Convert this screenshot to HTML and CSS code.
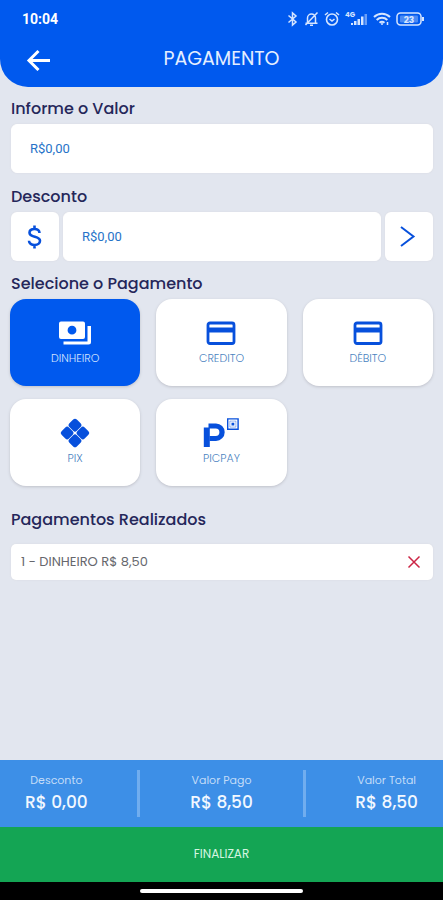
FILE: index.html
```html
<!DOCTYPE html>
<html lang="pt-BR">
<head>
<meta charset="utf-8">
<meta name="viewport" content="width=device-width, initial-scale=1">
<title>Pagamento</title>
<link rel="stylesheet" href="styles.css">
</head>
<body>
<div class="app">
  <header class="header">
    <div class="status">
      <span class="clock">10:04</span>
      <div class="status-icons">
        <svg width="12" height="16" viewBox="0 0 12 16" fill="none" stroke="currentColor" stroke-width="1.5"><path d="M1.500 4.500L9 11l-3.500 3V2L9 5l-7.500 6.500"/></svg>
        <svg width="15" height="16" viewBox="0 0 15 16" fill="none" stroke="currentColor" stroke-width="1.500"><path d="M1.500 12.200h12M3.500 12V7a4 4 0 0 1 8 0v5M6 14.300h3M13.500 1.500L1.500 14"/></svg>
        <svg width="16" height="16" viewBox="0 0 16 16" fill="none" stroke="currentColor" stroke-width="1.600"><circle cx="8" cy="8.500" r="5.500"/><path d="M1 4l3-2.500M15 4l-3-2.500M5.500 8L8 10l2.500-2"/></svg>
        <svg width="23" height="16" viewBox="0 0 23 16" fill="currentColor"><text class="network" x="0" y="6">4G</text><path d="M6 12h2v2H6zM9 10h2.500v4H9zM12.500 8H15v6h-2.500zM16 5.500h2.500V14H16z"/><path opacity=".5" d="M19.500 3H22v11h-2.500z"/></svg>
        <svg width="18" height="16" viewBox="0 0 18 16" fill="none" stroke="currentColor" stroke-width="2"><path d="M1 6a11.500 11.500 0 0 1 16 0M3.700 9a7.500 7.500 0 0 1 10.600 0M6.500 11.700a4 4 0 0 1 5 0"/><path d="M9 12v2M14.500 11v3" stroke-width="1.500"/></svg>
        <svg width="29" height="16" viewBox="0 0 29 16" fill="none" stroke="currentColor" stroke-width="1.500"><rect x="1" y="2" width="24" height="12" rx="3.500"/><path d="M27 6v4" stroke-width="2"/><rect x="4" y="4.500" width="18" height="7" rx="1" fill="currentColor" stroke="none" opacity=".35"/><text class="charge" x="13" y="11.500" text-anchor="middle">23</text></svg>
      </div>
    </div>
    <div class="titlebar">
      <button class="back" type="button" aria-label="Voltar">
        <svg width="26" height="24" viewBox="0 0 26 24" fill="none" stroke="currentColor" stroke-width="3"><path d="M25 13.500H4M13.500 4L4 13.500l9.500 9.500"/></svg>
      </button>
      <h1 class="title">PAGAMENTO</h1>
    </div>
  </header>

  <main class="content">
    <label class="heading" for="valor">Informe o Valor</label>
    <input class="field" id="valor" type="text" inputmode="decimal" placeholder="R$0,00">

    <label class="heading" for="desconto">Desconto</label>
    <div class="discount">
      <button class="tile" type="button" aria-label="Desconto em reais">
        <svg width="24" height="26" viewBox="0 0 24 26" fill="none" stroke="currentColor" stroke-width="2.600"><path d="M16.500 9C16.500 6.500 14.500 5 11.500 5 8.500 5 6.500 6.500 6.500 8.800c0 5.200 10.500 2.900 10.500 8 0 2.500-2.200 4.200-5.300 4.200C8.500 21 6 19.400 6 16.700M11.500 1.500V5M11.500 21v3.500"/></svg>
      </button>
      <input class="field" id="desconto" type="text" inputmode="decimal" placeholder="R$0,00">
      <button class="tile" type="button" aria-label="Aplicar desconto">
        <svg width="20" height="24" viewBox="0 0 20 24" fill="none" stroke="currentColor" stroke-width="2"><path d="M2 2l12.500 9.500L2 21"/></svg>
      </button>
    </div>

    <h2 class="heading">Selecione o Pagamento</h2>
    <div class="methods">
      <button class="method selected" type="button" aria-pressed="true">
        <svg width="34" height="30" viewBox="0 0 34 30" fill="currentColor"><path fill-rule="evenodd" d="M3 3.500h22a2 2 0 0 1 2 2V19a2 2 0 0 1-2 2H3a2 2 0 0 1-2-2V5.500a2 2 0 0 1 2-2zm11 4.300a4.400 4.400 0 1 0 0 8.800 4.400 4.400 0 0 0 0-8.800z"/><path d="M29.500 8H33v16a2.500 2.500 0 0 1-2.500 2.500H5.500v-3h24z"/></svg>
        <span>DINHEIRO</span>
      </button>
      <button class="method" type="button" aria-pressed="false">
        <svg width="34" height="30" viewBox="0 0 34 30" fill="none" stroke="currentColor"><rect x="4" y="5" width="26" height="20.500" rx="2" stroke-width="2.800"/><path d="M4 12h26" stroke-width="5"/></svg>
        <span>CREDITO</span>
      </button>
      <button class="method" type="button" aria-pressed="false">
        <svg width="34" height="30" viewBox="0 0 34 30" fill="none" stroke="currentColor"><rect x="4" y="5" width="26" height="20.500" rx="2" stroke-width="2.800"/><path d="M4 12h26" stroke-width="5"/></svg>
        <span>DÉBITO</span>
      </button>
      <button class="method" type="button" aria-pressed="false">
        <svg width="34" height="30" viewBox="0 0 34 30" fill="currentColor"><g transform="translate(17 15) rotate(45)"><rect x="-10.800" y="-10.800" width="10.500" height="10.500" rx="2.600"/><rect x=".3" y="-10.800" width="10.500" height="10.500" rx="2.600"/><rect x="-10.800" y=".3" width="10.500" height="10.500" rx="2.600"/><rect x=".3" y=".3" width="10.500" height="10.500" rx="2.600"/></g></svg>
        <span>PIX</span>
      </button>
      <button class="method" type="button" aria-pressed="false">
        <svg width="36" height="30" viewBox="0 0 36 30" fill="currentColor"><path d="M.8 9.500h6v19.500h-6z"/><path d="M5.500 5.500H13a8.700 8.700 0 0 1 0 17.400H6.500v-5h6.200a3.700 3.700 0 0 0 0-7.400H5.500z"/><path fill="none" stroke="currentColor" stroke-width="1.400" d="M24.700.9h10.400v10.400H24.700z"/><path fill="none" stroke="currentColor" stroke-width=".7" opacity=".6" d="M26.900 3.100h6v6h-6z"/><path d="M28.500 4.700h2.800v2.800h-2.800z"/></svg>
        <span>PICPAY</span>
      </button>
    </div>

    <h2 class="heading done">Pagamentos Realizados</h2>
    <ul class="payments">
      <li class="payment">
        <span>1 - DINHEIRO R$ 8,50</span>
        <button class="remove" type="button" aria-label="Remover pagamento">
          <svg width="14" height="14" viewBox="0 0 14 14" fill="none" stroke="currentColor" stroke-width="1.500"><path d="M1.500 1.500l11 11M12.500 1.500l-11 11"/></svg>
        </button>
      </li>
    </ul>
  </main>

  <footer>
    <div class="summary">
      <div class="total"><span>Desconto</span><strong>R$ 0,00</strong></div>
      <i class="divider"></i>
      <div class="total"><span>Valor Pago</span><strong>R$ 8,50</strong></div>
      <i class="divider"></i>
      <div class="total"><span>Valor Total</span><strong>R$ 8,50</strong></div>
    </div>
    <button class="finish" type="button">FINALIZAR</button>
    <div class="navbar"><i class="handle"></i></div>
  </footer>
</div>
</body>
</html>
```
FILE: styles.css
```css
* {
  box-sizing: border-box;
}

body {
  margin: 0;
  background: #e2e6ef;
  font-family: Poppins, Inter, "Liberation Sans", sans-serif;
}

button {
  margin: 0;
  padding: 0;
  border: 0;
  background: none;
  color: inherit;
  font: inherit;
  cursor: pointer;
}

svg {
  display: block;
}

.app {
  display: flex;
  flex-direction: column;
  min-height: 100vh;
}

.header {
  padding-bottom: 10px;
  border-radius: 0 0 28px 28px;
  background: #0059ee;
  color: #fff;
}

.status {
  display: flex;
  align-items: center;
  justify-content: space-between;
  height: 37px;
  padding: 0 18px 0 22px;
}

.clock {
  font-family: Roboto, sans-serif;
  font-size: 14px;
  font-weight: 700;
}

.status-icons {
  display: flex;
  align-items: center;
  gap: 5px;
  color: #d5e5ff;
}

.network,
.charge {
  font-size: 7px;
  font-weight: 700;
  fill: currentColor;
  stroke: none;
}

.charge {
  font-size: 9px;
}

.titlebar {
  display: grid;
  grid-template-columns: 26px 1fr 26px;
  align-items: center;
  height: 40px;
  padding: 4px 25px 0;
}

.title {
  margin: 0;
  color: #e4eeff;
  font-size: 19px;
  font-weight: 400;
  line-height: 24px;
  text-align: center;
}

.content {
  flex: 1;
  padding: 10px 10px 24px 11px;
}

.heading {
  display: block;
  margin: 0;
  color: #25275a;
  font-size: 16px;
  font-weight: 500;
  line-height: 24px;
}

.field {
  display: block;
  width: 100%;
  height: 49px;
  margin: 3px 0 12px;
  padding: 0 18px;
  border: 1px solid #fff;
  border-radius: 6px;
  background: #fff;
  box-shadow: 0 0 2px #d9d9df;
  color: #2673c8;
  font-family: Roboto, sans-serif;
  font-size: 13px;
}

.field::placeholder {
  color: #2673c8;
  opacity: 1;
}

.discount {
  display: flex;
  gap: 4px;
  margin: 3px 0 11px;
}

.discount .field {
  flex: 1;
  min-width: 0;
  margin: 0;
}

.tile {
  display: grid;
  place-items: center;
  width: 48px;
  height: 49px;
  border-radius: 6px;
  background: #fff;
  box-shadow: 0 0 2px #d9d9df;
  color: #0750dc;
}

.methods {
  display: grid;
  grid-template-columns: repeat(3, 1fr);
  gap: 13px 16px;
  margin: 3px 0 0 -1px;
}

.method {
  display: flex;
  flex-direction: column;
  align-items: center;
  gap: 2px;
  height: 87px;
  padding-top: 19px;
  border-radius: 16px;
  background: #fff;
  box-shadow: 0 1px 3px #bfc1ca;
  color: #0750dc;
}

.method span {
  color: #4b83bf;
  font-size: 11px;
  font-weight: 300;
  line-height: 16px;
}

.method.selected {
  background: #0059ee;
  color: #fff;
}

.method.selected span {
  color: #d5e5ff;
}

.done {
  margin-top: 22px;
}

.payments {
  margin: 12px 0 0;
  padding: 0;
  list-style: none;
}

.payment {
  display: flex;
  align-items: center;
  justify-content: space-between;
  height: 36px;
  padding: 0 12px 0 10px;
  border-radius: 5px;
  background: #fff;
  box-shadow: 0 0 2px #d9d9df;
  color: #66676d;
  font-size: 13px;
}

.remove {
  color: #cc2545;
}

.summary {
  display: flex;
  align-items: center;
  justify-content: space-between;
  height: 67px;
  padding: 0 25px;
  background: #3d8fe7;
}

.total {
  display: flex;
  flex-direction: column;
  align-items: center;
  padding-bottom: 4px;
  color: #c3dcf8;
  font-size: 11px;
  line-height: 20px;
}

.total strong {
  color: #f2f8ff;
  font-size: 17px;
  font-weight: 500;
  line-height: 24px;
}

.divider {
  width: 3px;
  height: 47px;
  background: #70adef;
}

.finish {
  display: block;
  width: 100%;
  height: 55px;
  padding-bottom: 2px;
  background: #14a554;
  color: #d6f5e1;
  font-size: 12px;
}

.navbar {
  display: grid;
  place-items: center;
  height: 18px;
  background: #000;
}

.handle {
  width: 37%;
  height: 4px;
  border-radius: 2px;
  background: #fff;
}
```
